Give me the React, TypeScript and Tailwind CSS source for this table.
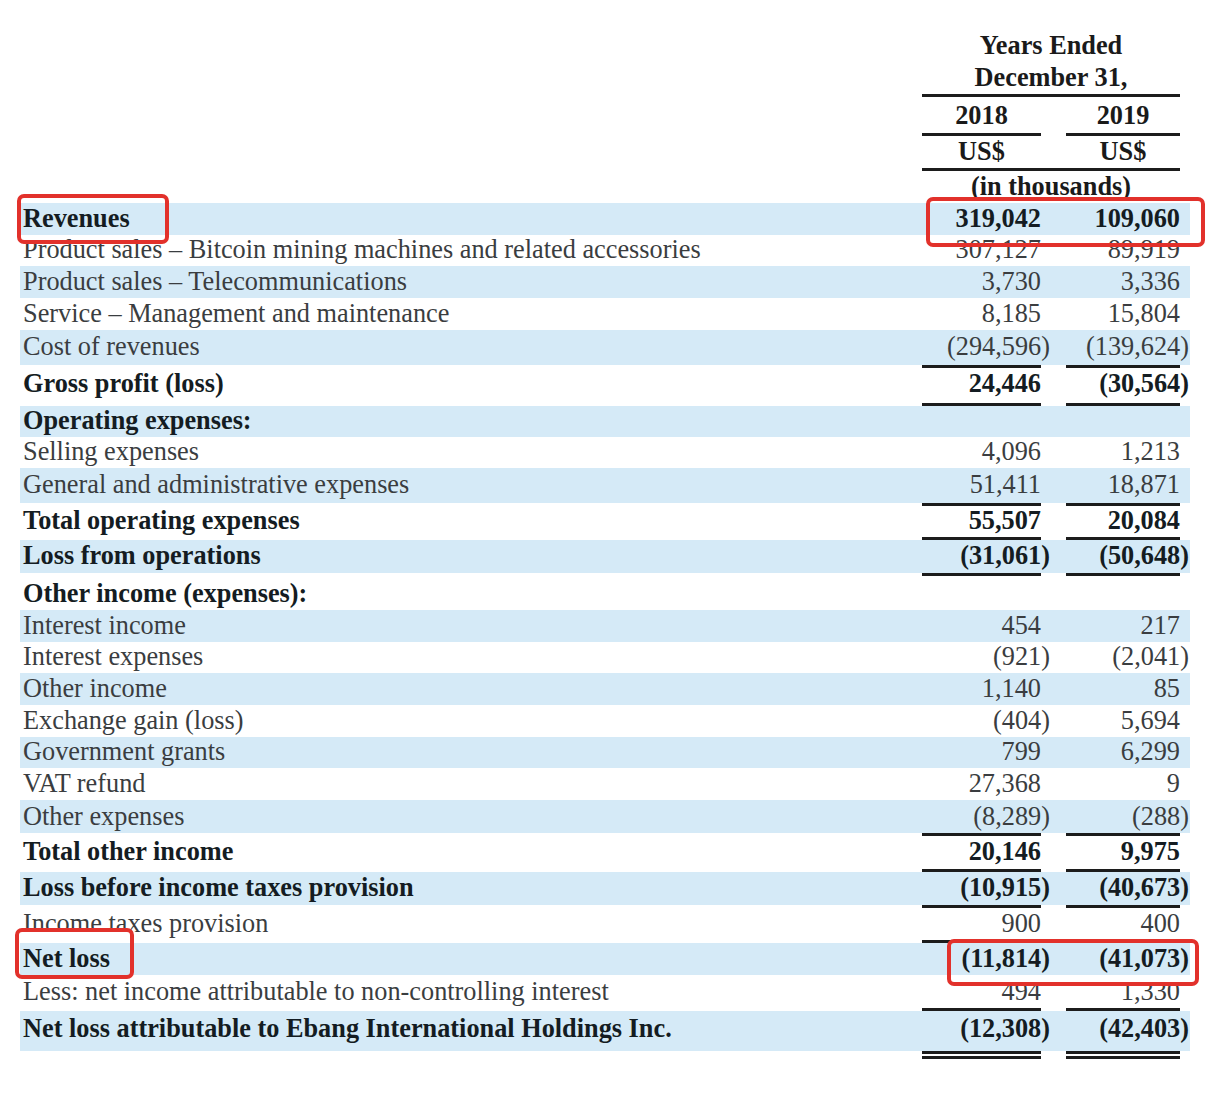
import React from 'react';

type Row = {
  label: string;
  a?: string;
  b?: string;
  bold?: boolean;
  blue?: boolean;
  h: number;
  lift?: number;
  rule?: 'single' | 'double';
};

const rows: Row[] = [
  { label: 'Revenues', a: '319,042', b: '109,060', bold: true, blue: true, h: 32 },
  { label: 'Product sales – Bitcoin mining machines and related accessories', a: '307,127', b: '89,919', h: 31 },
  { label: 'Product sales – Telecommunications', a: '3,730', b: '3,336', blue: true, h: 32 },
  { label: 'Service – Management and maintenance', a: '8,185', b: '15,804', h: 32 },
  { label: 'Cost of revenues', a: '(294,596)', b: '(139,624)', blue: true, h: 35, lift: 2, rule: 'single' },
  { label: 'Gross profit (loss)', a: '24,446', b: '(30,564)', bold: true, h: 35, lift: 3, rule: 'single' },
  { label: 'Operating expenses:', bold: true, blue: true, h: 31 },
  { label: 'Selling expenses', a: '4,096', b: '1,213', h: 31 },
  { label: 'General and administrative expenses', a: '51,411', b: '18,871', blue: true, h: 35, lift: 2, rule: 'single' },
  { label: 'Total operating expenses', a: '55,507', b: '20,084', bold: true, h: 31, rule: 'single' },
  { label: 'Loss from operations', a: '(31,061)', b: '(50,648)', bold: true, blue: true, h: 33, lift: 1, rule: 'single' },
  { label: 'Other income (expenses):', bold: true, h: 34 },
  { label: 'Interest income', a: '454', b: '217', blue: true, h: 32 },
  { label: 'Interest expenses', a: '(921)', b: '(2,041)', h: 31 },
  { label: 'Other income', a: '1,140', b: '85', blue: true, h: 32 },
  { label: 'Exchange gain (loss)', a: '(404)', b: '5,694', h: 32 },
  { label: 'Government grants', a: '799', b: '6,299', blue: true, h: 31 },
  { label: 'VAT refund', a: '27,368', b: '9', h: 32 },
  { label: 'Other expenses', a: '(8,289)', b: '(288)', blue: true, h: 33, rule: 'single' },
  { label: 'Total other income', a: '20,146', b: '9,975', bold: true, h: 33, lift: 1, rule: 'single' },
  { label: 'Loss before income taxes provision', a: '(10,915)', b: '(40,673)', bold: true, blue: true, h: 33, lift: 1, rule: 'single' },
  { label: 'Income taxes provision', a: '900', b: '400', h: 32, rule: 'single' },
  { label: 'Net loss', a: '(11,814)', b: '(41,073)', bold: true, blue: true, h: 32 },
  { label: 'Less: net income attributable to non-controlling interest', a: '494', b: '1,330', h: 33, rule: 'single' },
  { label: 'Net loss attributable to Ebang International Holdings Inc.', a: '(12,308)', b: '(42,403)', bold: true, blue: true, h: 40, lift: 6, rule: 'double' },
];

function Num({ v }: { v?: string }) {
  if (!v) return null;
  if (v.endsWith(')')) {
    return (
      <>
        {v.slice(0, -1)}
        <span className="-mr-[9px]">)</span>
      </>
    );
  }
  return <>{v}</>;
}

function Rule({ kind }: { kind: 'single' | 'double' | 'full' }) {
  if (kind === 'full') {
    return (
      <div className="flex pr-[10px]">
        <div className="flex-1" />
        <div className="w-[258px] h-[3px] bg-[#1c1c1c]" />
      </div>
    );
  }
  const line =
    kind === 'double' ? (
      <div className="flex flex-col gap-[2px]">
        <div className="h-[3px] bg-[#1c1c1c]" />
        <div className="h-[3px] bg-[#1c1c1c]" />
      </div>
    ) : (
      <div className="h-[3px] bg-[#1c1c1c]" />
    );
  return (
    <div className="flex pr-[10px]">
      <div className="flex-1" />
      <div className="w-[119px]">{line}</div>
      <div className="w-[114px] ml-[25px]">{line}</div>
    </div>
  );
}

export default function App() {
  return (
    <div className="relative w-[1218px] h-[1106px] bg-white font-['Liberation_Serif','Times_New_Roman',serif] text-[26.3px] leading-[32px]">
      <div className="ml-[20px] w-[1170px] pt-[30px]">
        {/* column header */}
        <div className="flex pr-[10px] font-bold text-[#1a1a1a]">
          <div className="flex-1" />
          <div className="w-[258px] text-center">
            <div className="h-[32px]">Years Ended</div>
            <div className="h-[32px]">December 31,</div>
          </div>
        </div>
        <Rule kind="full" />
        <div className="flex pr-[10px] font-bold text-[#1a1a1a] h-[36px] items-end pb-[1px]">
          <div className="flex-1" />
          <div className="w-[119px] text-center">2018</div>
          <div className="w-[114px] ml-[25px] text-center">2019</div>
        </div>
        <div className="flex pr-[10px]">
          <div className="flex-1" />
          <div className="w-[119px] h-[3px] bg-[#1c1c1c]" />
          <div className="w-[114px] ml-[25px] h-[3px] bg-[#1c1c1c]" />
        </div>
        <div className="flex pr-[10px] font-bold text-[#1a1a1a] h-[32px]">
          <div className="flex-1" />
          <div className="w-[119px] text-center">US$</div>
          <div className="w-[114px] ml-[25px] text-center">US$</div>
        </div>
        <Rule kind="full" />
        <div className="flex pr-[10px] font-bold text-[#1a1a1a] h-[32px]">
          <div className="flex-1" />
          <div className="w-[258px] text-center">(in thousands)</div>
        </div>

        {/* statement rows */}
        {rows.map((r, i) => (
          <React.Fragment key={i}>
            <div
              className={`flex items-end pr-[10px] ${r.blue ? 'bg-[#d5eaf7]' : 'bg-white'} ${
                r.bold ? 'font-bold text-[#141c22]' : 'text-[#3a3d40]'
              }`}
              style={{ height: r.h, paddingBottom: r.lift ?? 0 }}
            >
              <div className="flex-1 pl-[3px] whitespace-nowrap">{r.label}</div>
              <div className="w-[119px] text-right whitespace-nowrap">
                <Num v={r.a} />
              </div>
              <div className="w-[114px] ml-[25px] text-right whitespace-nowrap">
                <Num v={r.b} />
              </div>
            </div>
            {r.rule && <Rule kind={r.rule} />}
          </React.Fragment>
        ))}
      </div>

      {/* red highlight boxes */}
      <div className="absolute left-[17px] top-[194px] w-[152px] h-[50px] border-[4px] border-[#e2312b] rounded-[7px]" />
      <div className="absolute left-[926px] top-[197px] w-[279px] h-[50px] border-[4px] border-[#e2312b] rounded-[7px]" />
      <div className="absolute left-[15px] top-[928px] w-[119px] h-[51px] border-[4px] border-[#e2312b] rounded-[7px]" />
      <div className="absolute left-[947px] top-[939px] w-[252px] h-[47px] border-[4px] border-[#e2312b] rounded-[7px]" />
    </div>
  );
}
